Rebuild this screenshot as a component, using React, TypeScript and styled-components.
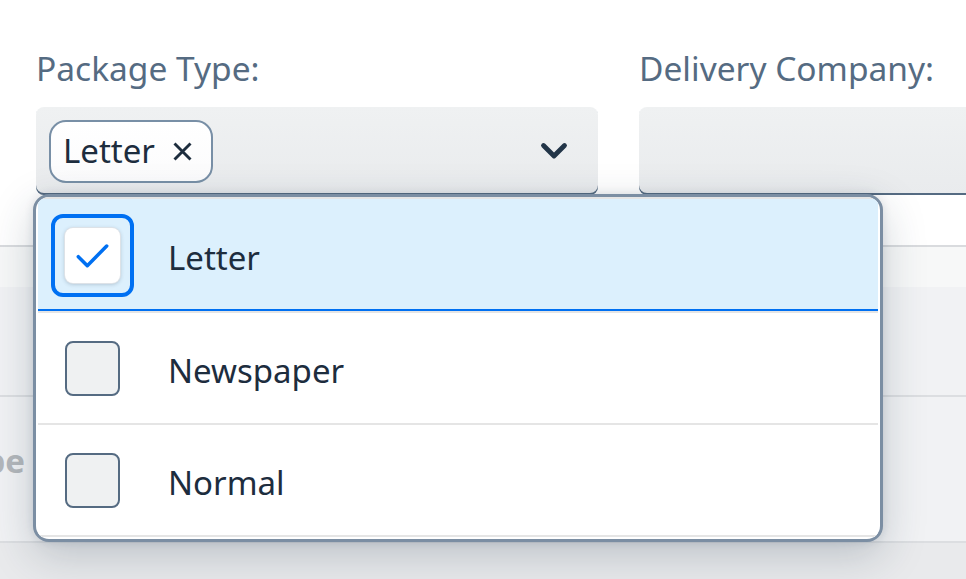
import React from "react";
import styled, { createGlobalStyle, css } from "styled-components";

const GlobalStyle = createGlobalStyle`
  html, body {
    margin: 0;
    padding: 0;
    background: #e9eaec;
  }
  body {
    font-family: "Noto Sans", "Open Sans", sans-serif;
    color: #1d2d3e;
  }
  * { box-sizing: border-box; }
`;

const Page = styled.div`
  position: relative;
  width: 966px;
  height: 579px;
  overflow: hidden;
  background: #e9eaec;
`;

const FormArea = styled.div`
  height: 247px;
  padding: 48px 0 0 36px;
  background: #ffffff;
  border-bottom: 2px solid #d9dbde;
  display: flex;
  gap: 41px;
`;

const Field = styled.div<{ $width: number }>`
  flex: none;
  width: ${(p) => p.$width}px;
  display: flex;
  flex-direction: column;
  gap: 19px;
`;

const Label = styled.label`
  font-size: 33.5px;
  line-height: 40px;
  height: 40px;
  color: #556b82;
  white-space: nowrap;
`;

const InputShell = styled.div`
  height: 88px;
  border-radius: 8px;
  background: linear-gradient(#eff1f2, #e9ebed);
  box-shadow: inset 0 -2px 0 #556b82;
  display: flex;
  align-items: center;
  padding-left: 13px;
`;

const Token = styled.span`
  height: 63px;
  display: inline-flex;
  align-items: center;
  gap: 18px;
  padding: 0 19px 0 12px;
  border: 2px solid #788fa6;
  border-radius: 17px;
  background: linear-gradient(#ffffff, #fbfbfc);
  font-size: 33px;
  line-height: 40px;
  color: #1d2d3e;
`;

const IconBox = styled.span`
  margin-left: auto;
  width: 88px;
  height: 86px;
  display: flex;
  align-items: center;
  justify-content: center;
`;

const TableArea = styled.div`
  display: flex;
  flex-direction: column;
`;

const SubBar = styled.div`
  height: 40px;
  background: #f7f8f8;
`;

const TableRow = styled.div<{ $height: number }>`
  height: ${(p) => p.$height}px;
  background: #f1f2f4;
  border-bottom: 2px solid #dcdee1;
  display: flex;
`;

const EdgeCell = styled.div`
  width: 25px;
  flex: none;
  display: flex;
  justify-content: flex-end;
  padding-top: 44px;
  font-size: 33px;
  line-height: 40px;
  font-weight: 700;
  color: #b3b7bb;
  white-space: nowrap;
`;

const Popover = styled.div`
  position: absolute;
  left: 33px;
  top: 194px;
  width: 850px;
  height: 348px;
  border: 3px solid #7b8ea3;
  border-radius: 16px;
  background: #ffffff;
  padding: 0 2px 2px;
  overflow: hidden;
  box-shadow: 0 14px 44px rgba(34, 53, 72, 0.22), 0 0 10px rgba(34, 53, 72, 0.12);
`;

const List = styled.ul`
  list-style: none;
  margin: 0;
  padding: 0;
  border-top: 2px solid #e5e5e5;
`;

const Item = styled.li<{ $selected?: boolean }>`
  height: ${(p) => (p.$selected ? 114 : 112)}px;
  display: flex;
  align-items: center;
  padding-left: 13px;
  border-bottom: 2px solid #e5e5e5;
  background: #ffffff;
  ${(p) =>
    p.$selected &&
    css`
      background: #dcf0fd;
      box-shadow: inset 0 -2px 0 #0070f2;
    `}
`;

const CheckRing = styled.span<{ $focused?: boolean }>`
  width: 83px;
  height: 83px;
  flex: none;
  border: 4px solid ${(p) => (p.$focused ? "#0070f2" : "transparent")};
  border-radius: 12px;
  display: flex;
  align-items: center;
  justify-content: center;
`;

const CheckBox = styled.span<{ $checked?: boolean }>`
  width: 55px;
  height: 55px;
  border-radius: 8px;
  display: flex;
  align-items: center;
  justify-content: center;
  ${(p) =>
    p.$checked
      ? css`
          background: #ffffff;
          box-shadow: 0 0 0 1px #dde2e7, 0 1px 4px rgba(34, 53, 72, 0.3);
        `
      : css`
          background: #eff1f2;
          border: 2px solid #556b82;
        `}
`;

const ItemText = styled.span`
  margin-left: 34px;
  padding-top: 5px;
  font-size: 33px;
  line-height: 40px;
  color: #1d2d3e;
`;

const Chevron = () => (
  <svg width="28" height="18" viewBox="0 0 28 18" fill="none">
    <path
      d="M3.5 3.5 L14 14 L24.5 3.5"
      stroke="#223548"
      strokeWidth="4.8"
      strokeLinecap="round"
      strokeLinejoin="round"
    />
  </svg>
);

const Cross = () => (
  <svg width="19" height="19" viewBox="0 0 19 19" fill="none">
    <path d="M1.5 1.5 L17.5 17.5 M17.5 1.5 L1.5 17.5" stroke="#1d2d3e" strokeWidth="2.9" />
  </svg>
);

const Check = () => (
  <svg width="55" height="55" viewBox="0 0 55 55" fill="none">
    <path
      d="M13.3 28.7 L22.3 37.7 L41.7 18"
      stroke="#0070f2"
      strokeWidth="3.5"
      strokeLinecap="round"
      strokeLinejoin="round"
    />
  </svg>
);

const options = [
  { label: "Letter", checked: true },
  { label: "Newspaper", checked: false },
  { label: "Normal", checked: false },
];

export default function App() {
  return (
    <>
      <GlobalStyle />
      <Page>
        <FormArea>
          <Field $width={562}>
            <Label>Package Type:</Label>
            <InputShell>
              <Token>
                Letter
                <Cross />
              </Token>
              <IconBox>
                <Chevron />
              </IconBox>
            </InputShell>
          </Field>
          <Field $width={400}>
            <Label>Delivery Company:</Label>
            <InputShell />
          </Field>
        </FormArea>
        <TableArea>
          <SubBar />
          <TableRow $height={110} />
          <TableRow $height={146}>
            <EdgeCell>Type</EdgeCell>
          </TableRow>
        </TableArea>
        <Popover>
          <List>
            {options.map((o) => (
              <Item key={o.label} $selected={o.checked}>
                <CheckRing $focused={o.checked}>
                  <CheckBox $checked={o.checked}>{o.checked && <Check />}</CheckBox>
                </CheckRing>
                <ItemText>{o.label}</ItemText>
              </Item>
            ))}
          </List>
        </Popover>
      </Page>
    </>
  );
}
